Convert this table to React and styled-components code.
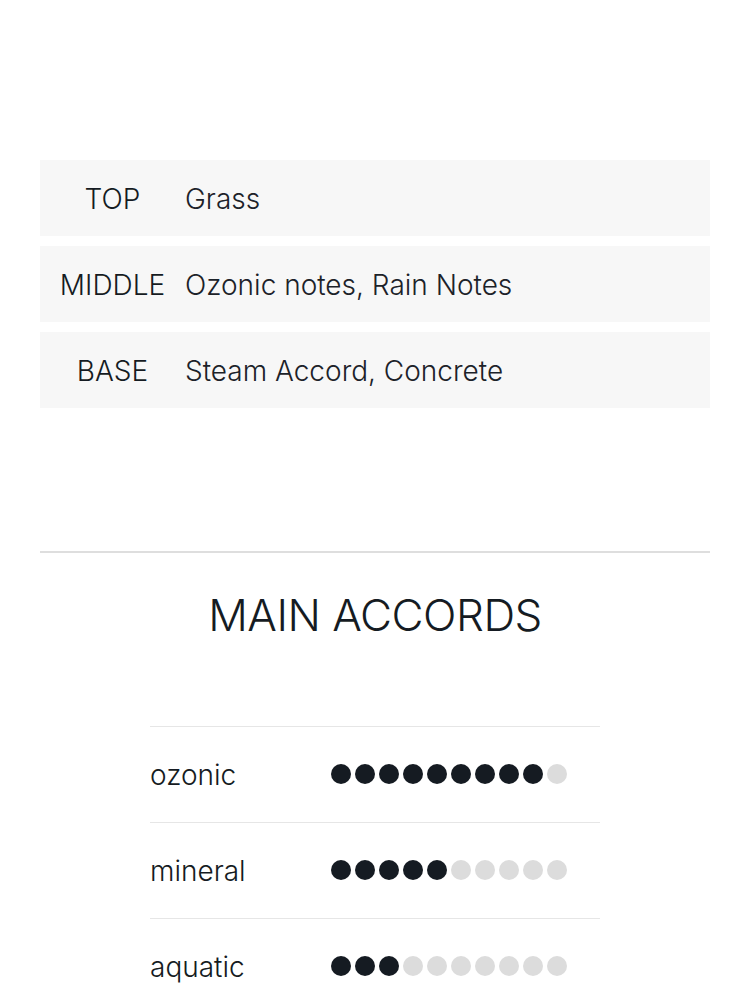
import React from 'react';
import styled, { createGlobalStyle } from 'styled-components';

const GlobalStyle = createGlobalStyle`
  html, body {
    margin: 0;
    padding: 0;
    background: #ffffff;
    font-family: Inter, "Noto Sans", sans-serif;
    color: #151b22;
  }
`;

const Page = styled.div`
  padding: 160px 40px 0;
`;

const Notes = styled.div`
  display: flex;
  flex-direction: column;
  gap: 10px;
`;

const NoteRow = styled.div`
  display: grid;
  grid-template-columns: 145px 1fr;
  align-items: center;
  height: 76px;
  padding-top: 2px;
  box-sizing: border-box;
  background: #f7f7f7;
  font-size: 28px;
  font-weight: 300;
`;

const NoteLabel = styled.div`
  text-align: center;
  color: #151b22;
`;

const NoteValue = styled.div`
  color: #1c2229;
`;

const Divider = styled.hr`
  margin: 143px 0 0;
  border: none;
  height: 2px;
  background: #dedede;
`;

const Heading = styled.h2`
  margin: 34px 0 0;
  text-align: center;
  font-size: 44px;
  font-weight: 300;
  line-height: 56px;
  letter-spacing: -0.5px;
`;

const Accords = styled.div`
  width: 450px;
  margin: 83px auto 0;
`;

const AccordRow = styled.div`
  display: grid;
  grid-template-columns: 181px 1fr;
  align-items: center;
  height: 95px;
  border-top: 1px solid #e6e6e6;
  font-size: 28px;
  font-weight: 300;
`;

const Dots = styled.div`
  display: flex;
  gap: 4px;
  margin-top: -2px;
`;

const Dot = styled.span`
  width: 20px;
  height: 20px;
  border-radius: 50%;
  background: ${p => (p.$on ? '#151b22' : '#dcdcdc')};
`;

const notes = [
  ['TOP', 'Grass'],
  ['MIDDLE', 'Ozonic notes, Rain Notes'],
  ['BASE', 'Steam Accord, Concrete'],
];

const accords = [
  ['ozonic', 9],
  ['mineral', 5],
  ['aquatic', 3],
];

export default function App() {
  return (
    <>
      <GlobalStyle />
      <Page>
        <Notes>
          {notes.map(([label, value]) => (
            <NoteRow key={label}>
              <NoteLabel>{label}</NoteLabel>
              <NoteValue>{value}</NoteValue>
            </NoteRow>
          ))}
        </Notes>
        <Divider />
        <Heading>MAIN ACCORDS</Heading>
        <Accords>
          {accords.map(([name, level]) => (
            <AccordRow key={name}>
              <span>{name}</span>
              <Dots>
                {Array.from({ length: 10 }, (_, i) => (
                  <Dot key={i} $on={i < level} />
                ))}
              </Dots>
            </AccordRow>
          ))}
        </Accords>
      </Page>
    </>
  );
}
